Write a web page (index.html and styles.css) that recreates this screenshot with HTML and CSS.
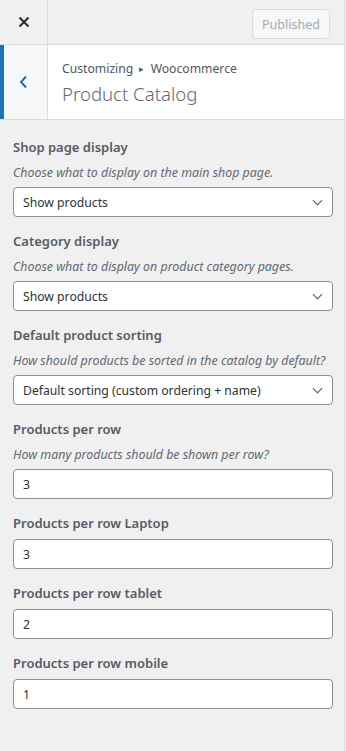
FILE: index.html
```html
<!DOCTYPE html>
<html lang="en">
<head>
  <meta charset="UTF-8">
  <meta name="viewport" content="width=device-width, initial-scale=1.0">
  <title>Customizing Product Catalog</title>
  <link rel="stylesheet" href="styles.css">
</head>
<body>
  <div class="sidebar">
    <header class="top-bar">
      <button class="close-btn" aria-label="Close">
        <svg width="12" height="12" viewBox="0 0 12 12"><path d="M1.5 1.5l9 9M10.5 1.5l-9 9" stroke="#2c3338" stroke-width="2.2" fill="none"/></svg>
      </button>
      <div class="top-actions">
        <button class="publish-btn" disabled>Published</button>
      </div>
    </header>

    <div class="section-head">
      <button class="back-btn" aria-label="Back">
        <svg width="9" height="14" viewBox="0 0 9 14"><path d="M7 1.5L2 7l5 5.5" stroke="#2271b1" stroke-width="2" fill="none"/></svg>
      </button>
      <div class="section-title">
        <span class="crumbs">Customizing <span class="sep">&#9656;</span> Woocommerce</span>
        <h3>Product Catalog</h3>
      </div>
    </div>

    <div class="controls">
      <div class="control">
        <label class="control-title">Shop page display</label>
        <span class="description">Choose what to display on the main shop page.</span>
        <div class="select">Show products</div>
      </div>

      <div class="control">
        <label class="control-title">Category display</label>
        <span class="description">Choose what to display on product category pages.</span>
        <div class="select">Show products</div>
      </div>

      <div class="control">
        <label class="control-title">Default product sorting</label>
        <span class="description">How should products be sorted in the catalog by default?</span>
        <div class="select">Default sorting (custom ordering + name)</div>
      </div>

      <div class="control">
        <label class="control-title">Products per row</label>
        <span class="description">How many products should be shown per row?</span>
        <input class="text-input" type="text" value="3">
      </div>

      <div class="control">
        <label class="control-title">Products per row Laptop</label>
        <input class="text-input" type="text" value="3">
      </div>

      <div class="control">
        <label class="control-title">Products per row tablet</label>
        <input class="text-input" type="text" value="2">
      </div>

      <div class="control">
        <label class="control-title">Products per row mobile</label>
        <input class="text-input" type="text" value="1">
      </div>
    </div>
  </div>
</body>
</html>
```

FILE: styles.css
```css
body {
  margin: 0;
  padding: 0;
  background: #f0f0f1;
  font-family: "Noto Sans", "Open Sans", sans-serif;
  color: #50575e;
  font-size: 12.5px;
}

.sidebar {
  width: 344px;
  height: 751px;
  border-right: 1px solid #dcdcde;
  background: #f0f0f1;
}

/* top bar with close + publish */
.top-bar {
  display: flex;
  height: 44px;
  border-bottom: 1px solid #dcdcde;
}

.close-btn {
  width: 48px;
  height: 44px;
  padding: 0 0 0 1px;
  border: 0;
  border-right: 1px solid #dcdcde;
  background: transparent;
  display: flex;
  align-items: center;
  justify-content: center;
}

.top-actions {
  flex: 1;
  display: flex;
  justify-content: flex-end;
  align-items: flex-start;
  padding: 9px 14px 0 0;
}

.publish-btn {
  width: 78px;
  height: 30px;
  padding: 0;
  font-family: inherit;
  font-size: 12.5px;
  color: #a7aaad;
  background: #f6f7f7;
  border: 1px solid #dcdcde;
  border-radius: 3px;
}

/* section heading */
.section-head {
  display: flex;
  height: 74px;
  background: #fff;
  border-bottom: 1px solid #dcdcde;
}

.back-btn {
  width: 48px;
  height: 74px;
  padding: 0 4px 0 0;
  border: 0;
  border-left: 4px solid #2271b1;
  border-right: 1px solid #dcdcde;
  background: #f6f7f7;
  display: flex;
  align-items: center;
  justify-content: center;
}

.section-title {
  padding: 14px 0 0 14px;
}

.crumbs {
  display: block;
  font-size: 12.2px;
  line-height: 20px;
  color: #50575e;
}

.crumbs .sep {
  font-size: 9px;
  margin: 0 3px;
  vertical-align: 1px;
}

.section-title h3 {
  margin: 1px 0 0;
  font-size: 18.6px;
  font-weight: 300;
  line-height: 28px;
  color: #646970;
}

/* controls */
.controls {
  padding: 17px 13px 0 13px;
}

.control {
  display: flex;
  flex-direction: column;
  margin-bottom: 14px;
}

.control-title {
  font-size: 13px;
  font-weight: 600;
  line-height: 20px;
  margin-bottom: 6px;
  color: #555c63;
}

.description {
  font-size: 12.4px;
  font-style: italic;
  line-height: 18px;
  margin: 1px 0 5px;
  color: #646970;
  white-space: nowrap;
}

.select,
.text-input {
  box-sizing: border-box;
  width: 320px;
  height: 30px;
  border: 1px solid #8c8f94;
  border-radius: 4px;
  background: #fff;
  font-family: inherit;
  font-size: 12.2px;
  color: #2c3338;
}

.select {
  display: flex;
  align-items: center;
  padding: 0 8px 0 9px;
  justify-content: space-between;
}

.select::after {
  content: "";
  width: 6px;
  height: 6px;
  border-right: 1.5px solid #50575e;
  border-bottom: 1.5px solid #50575e;
  transform: rotate(45deg);
  margin: -4px 3px 0 0;
}

.text-input {
  padding: 0 9px;
  margin: 0;
  outline: none;
}
```
